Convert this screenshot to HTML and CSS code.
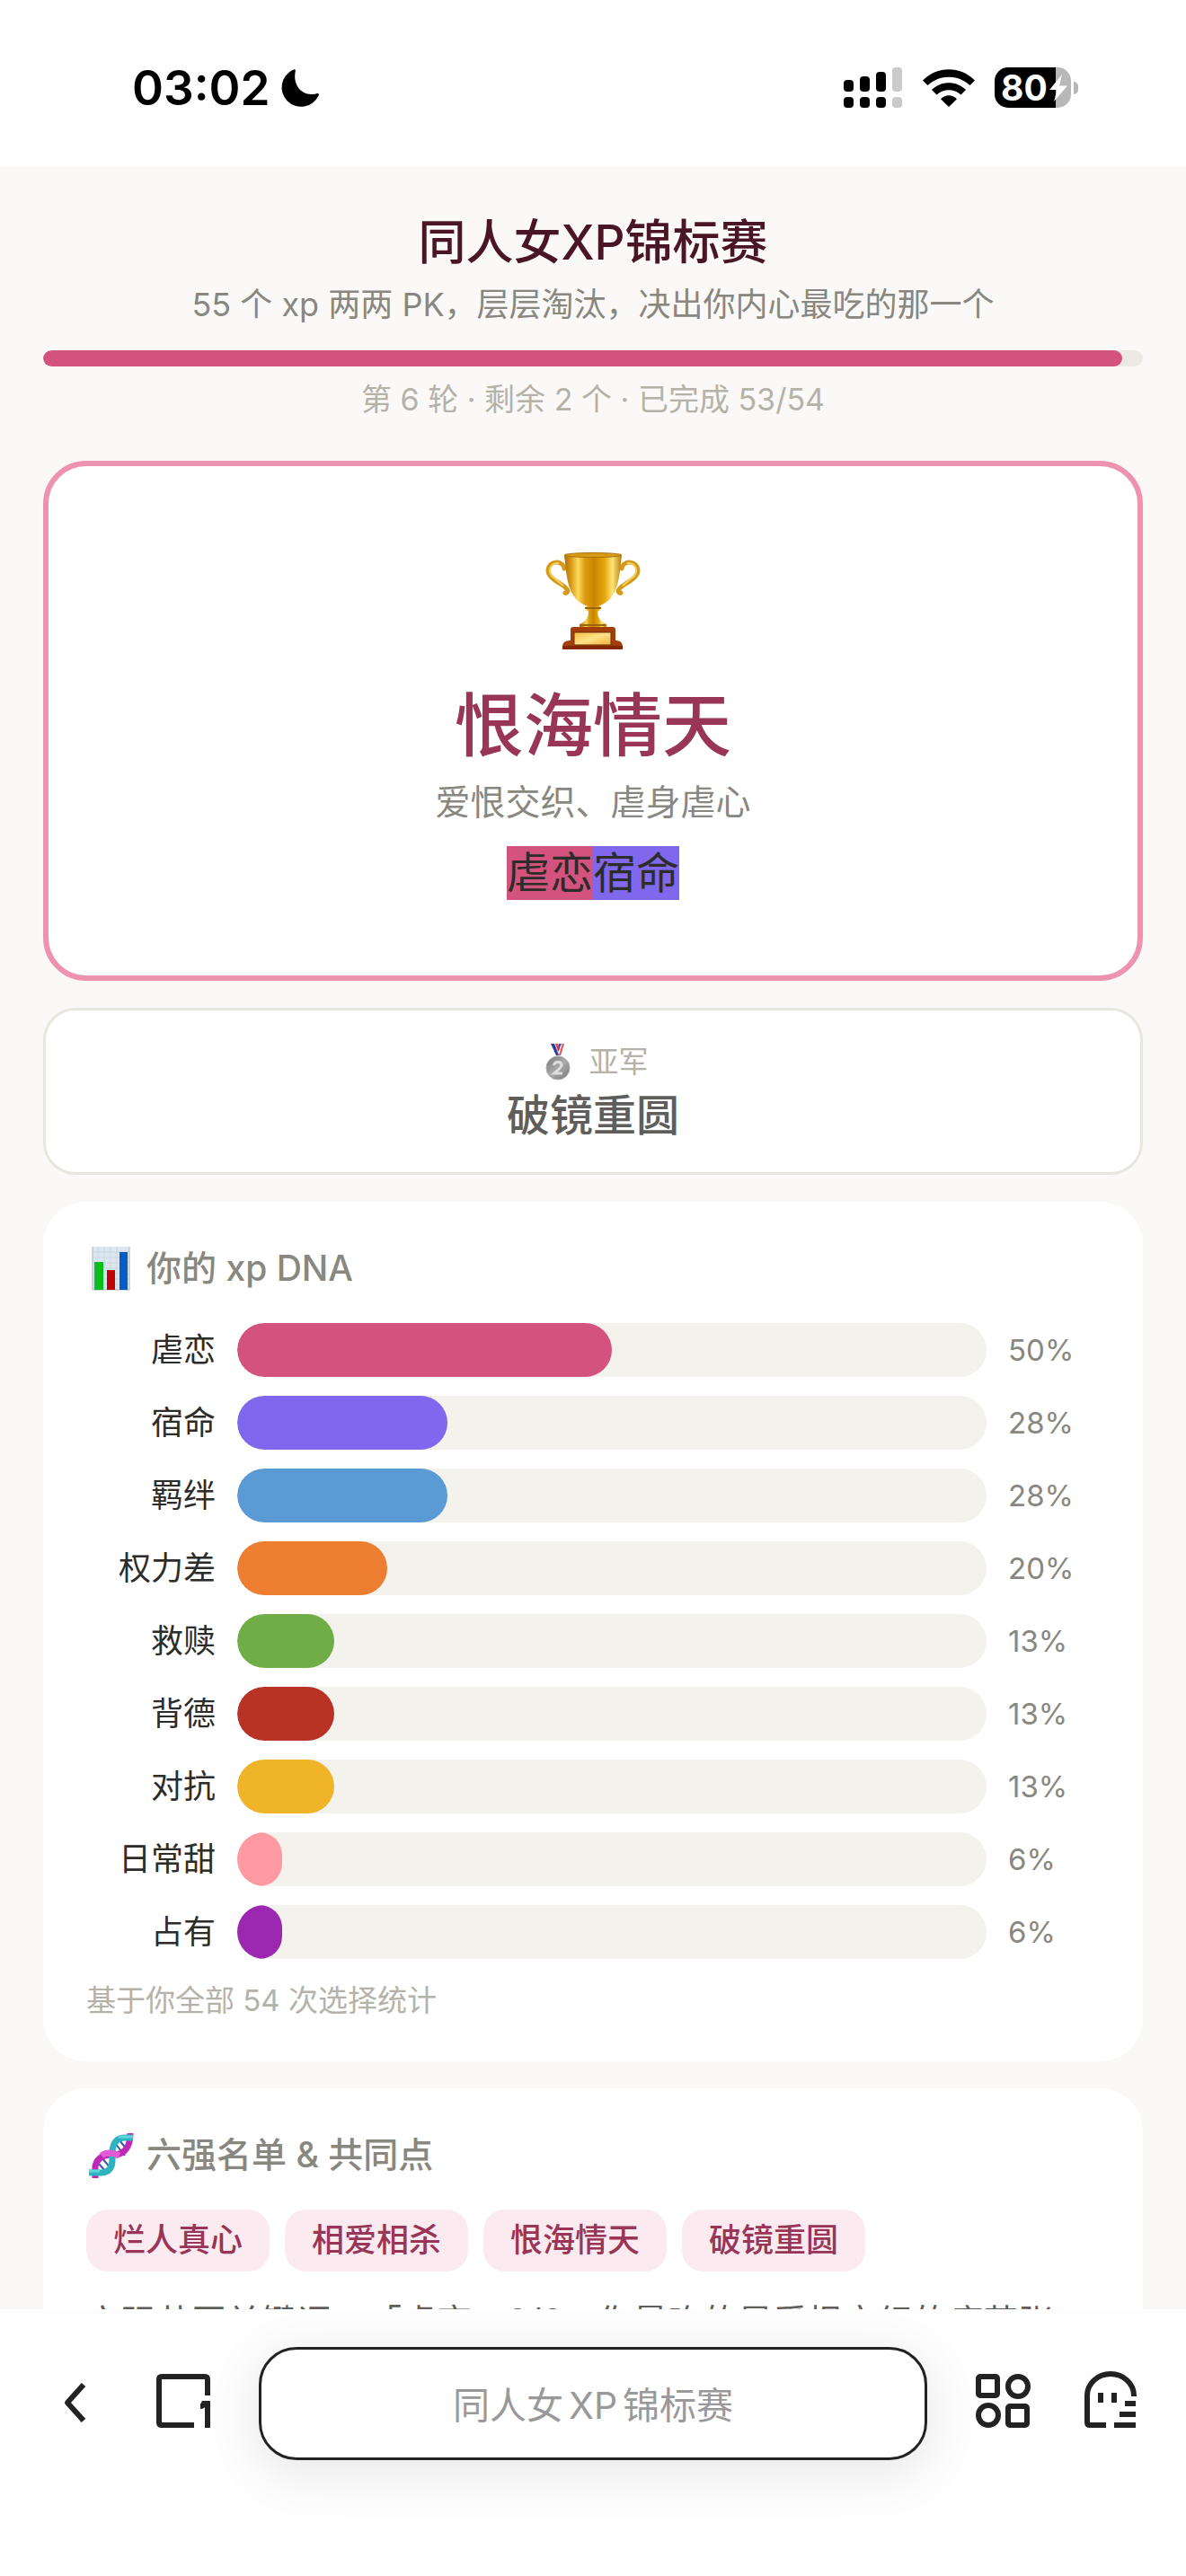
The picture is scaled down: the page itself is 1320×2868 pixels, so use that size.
FILE: index.html
```html
<!DOCTYPE html>
<html lang="zh-CN">
<head>
    <meta charset="UTF-8">
    <meta name="viewport" content="width=device-width, initial-scale=1.0">
    <title>同人女XP锦标赛</title>
    <link rel="stylesheet" href="styles.css">
</head>
<body>
    <div class="status-bar">
        <div class="status-left">
            <span class="time">03:02</span>
            <svg width="42" height="42" viewBox="0 0 42 42"><path d="M13 .8Q16.500-.8 15.800 2.500C13 15 20 28 34 28Q37.500 28 40 27Q42.800 26.500 41.500 29.500A21.500 21.500 0 1 1 13 .8z"/></svg>
        </div>
        <div class="status-right">
            <svg width="66" height="46" viewBox="0 0 66 46">
                <rect x="0" y="14" width="11" height="13" rx="4"/>
                <rect x="18" y="10" width="11" height="17" rx="4"/>
                <rect x="36" y="5" width="11" height="22" rx="4"/>
                <rect x="54" y="0" width="11" height="27" rx="4" fill="#cacaca"/>
                <rect x="0" y="33" width="11" height="12" rx="4"/>
                <rect x="18" y="33" width="11" height="12" rx="4"/>
                <rect x="36" y="33" width="11" height="12" rx="4"/>
                <rect x="54" y="33" width="11" height="12" rx="4" fill="#cacaca"/>
            </svg>
            <svg width="58" height="42" viewBox="0 0 58 42">
                <path d="M0 12.500C16-4 42-4 58 12.500L52.500 18C39.500 5.500 18.500 5.500 5.500 18z"/>
                <path d="M10 23C20.500 12.500 37.500 12.500 48 23L42.500 28.500C35 21.500 23 21.500 15.500 28.500z"/>
                <path d="M20 33.300C25 28 33 28 38 33.300L29 42z"/>
            </svg>
            <div class="battery">
                <span class="battery-level">80</span>
                <svg class="bolt" width="20" height="30" viewBox="0 0 20 30"><path d="M14 0L0 17H8.500L5 30L20 12.500H11z" fill="#fff"/></svg>
            </div>
        </div>
    </div>

    <main class="page">
        <h1>同人女XP锦标赛</h1>
        <p class="subtitle">55 个 xp 两两 PK，层层淘汰，决出你内心最吃的那一个</p>
        <div class="progress"><div class="progress-fill" style="width: 98.15%"></div></div>
        <p class="progress-text">第 6 轮 · 剩余 2 个 · 已完成 53/54</p>

        <section class="winner">
            <svg class="trophy" width="106" height="108" viewBox="0 0 106 108">
                <defs>
                    <linearGradient id="gold">
                        <stop offset="0" stop-color="#a96f08"/>
                        <stop offset=".12" stop-color="#d99a14"/>
                        <stop offset=".24" stop-color="#fbd95c"/>
                        <stop offset=".36" stop-color="#dc9c10"/>
                        <stop offset=".52" stop-color="#c98500"/>
                        <stop offset=".7" stop-color="#e5a70c"/>
                        <stop offset=".84" stop-color="#ffe478"/>
                        <stop offset="1" stop-color="#b77a08"/>
                    </linearGradient>
                    <linearGradient id="plate" x2="1" y2="1">
                        <stop offset="0" stop-color="#f3bd45"/>
                        <stop offset=".5" stop-color="#ffe288"/>
                        <stop offset="1" stop-color="#edb03a"/>
                    </linearGradient>
                </defs>
                <g fill="none" stroke="#d39a1c" stroke-width="5" stroke-linecap="round">
                    <path d="M21 18C20 9 4 8 3 20C3 31 24 36 25 43Q24 46 22 45"/>
                    <path d="M85 18C86 9 102 8 103 20C103 31 82 36 81 43Q82 46 84 45"/>
                </g>
                <g fill="none" stroke="#f7d263" stroke-width="2">
                    <path d="M15 12C7 11 2 19 7 26L20 37"/>
                    <path d="M91 12C99 11 104 19 99 26L86 37"/>
                </g>
                <path d="M21 3C24 28 24 52 47 60H59C82 52 82 28 85 3z" fill="url(#gold)"/>
                <ellipse cx="53" cy="3" rx="32" ry="2.500" fill="#d89b17" stroke="#a87210"/>
                <path d="M45 60H61V64L58 66Q58 76 68 80V84H38V80Q48 76 48 66L45 64z" fill="url(#gold)"/>
                <path d="M44 62H62M39 81H67" stroke="#9b6507" stroke-width="2"/>
                <path d="M28 86Q28 83 31 83H75Q78 83 78 86V98Q86 98 86 105V108H19V105Q19 98 28 98z" fill="#a33e08"/>
                <path d="M19 104H86V108H19z" fill="#842704"/>
                <rect x="32" y="89" width="41" height="14" fill="url(#plate)" stroke="#703008"/>
            </svg>
            <h2 class="winner-name">恨海情天</h2>
            <p class="winner-desc">爱恨交织、虐身虐心</p>
            <div class="winner-tags"><span class="tag tag-pink">虐恋</span><span class="tag tag-violet">宿命</span></div>
        </section>

        <section class="runner-up">
            <p class="runner-label">
                <svg width="36" height="40" viewBox="-8 0 36 40">
                    <defs><linearGradient id="silver" x2="1" y2="1"><stop offset="0" stop-color="#777"/><stop offset=".5" stop-color="#aaa"/><stop offset="1" stop-color="#777"/></linearGradient></defs>
                    <path d="M6 0H21L16 14H12z" fill="#e8e8f4"/>
                    <path d="M6 0H10L15 13H12z" fill="#2c3c98"/>
                    <path d="M11 0H14L16 6L14 9z" fill="#e84b4b"/>
                    <path d="M14 9L16 4L18 0H15z" fill="#3949a5"/>
                    <path d="M19 0H21L17 13H15z" fill="#ee4d4b"/>
                    <circle cx="14" cy="27" r="13" fill="url(#silver)" stroke="#aaa"/>
                    <path d="M9.500 24Q10 20.500 14 20.500Q18 20.500 18 24Q18 26 10 33H19" fill="none" stroke="#ddd" stroke-width="3"/>
                </svg>
                亚军
            </p>
            <h3 class="runner-name">破镜重圆</h3>
        </section>

        <section class="card">
            <h3 class="card-title">
                <svg width="54" height="54" viewBox="0 0 54 54">
                    <rect x="7" y="3" width="41" height="48" fill="#dce6ef"/>
                    <path d="M7 9H48M7 15H48M7 21H48M7 27H48M7 33H48M7 39H48M7 45H48M13 3V51M20 3V51M27 3V51M34 3V51" stroke="#c9d8e5"/>
                    <path d="M7 3V51H48V3" fill="none" stroke="#abb5c0"/>
                    <rect x="9" y="20" width="10" height="31" fill="#08bd1c"/>
                    <rect x="23" y="29" width="9" height="22" fill="#bd0505"/>
                    <rect x="37" y="9" width="9" height="42" fill="#075dc4"/>
                </svg>
                你的 xp DNA
            </h3>
            <div class="bars">
                <div class="bar-row"><span class="bar-label">虐恋</span><div class="track"><div class="fill pink" style="width: 50%"></div></div><span class="percent">50%</span></div>
                <div class="bar-row"><span class="bar-label">宿命</span><div class="track"><div class="fill violet" style="width: 28%"></div></div><span class="percent">28%</span></div>
                <div class="bar-row"><span class="bar-label">羁绊</span><div class="track"><div class="fill blue" style="width: 28%"></div></div><span class="percent">28%</span></div>
                <div class="bar-row"><span class="bar-label">权力差</span><div class="track"><div class="fill orange" style="width: 20%"></div></div><span class="percent">20%</span></div>
                <div class="bar-row"><span class="bar-label">救赎</span><div class="track"><div class="fill green" style="width: 13%"></div></div><span class="percent">13%</span></div>
                <div class="bar-row"><span class="bar-label">背德</span><div class="track"><div class="fill red" style="width: 13%"></div></div><span class="percent">13%</span></div>
                <div class="bar-row"><span class="bar-label">对抗</span><div class="track"><div class="fill yellow" style="width: 13%"></div></div><span class="percent">13%</span></div>
                <div class="bar-row"><span class="bar-label">日常甜</span><div class="track"><div class="fill rose" style="width: 6%"></div></div><span class="percent">6%</span></div>
                <div class="bar-row"><span class="bar-label">占有</span><div class="track"><div class="fill purple" style="width: 6%"></div></div><span class="percent">6%</span></div>
            </div>
            <p class="note">基于你全部 54 次选择统计</p>
        </section>

        <section class="card">
            <h3 class="card-title">
                <svg width="54" height="54" viewBox="0 0 54 54">
                    <path d="M13 36L23 47M18 31L27 42M32 14L43 28M37 11L46 22" stroke="#3557a8" stroke-width="2"/>
                    <path d="M10 53V40Q12 29 25 27Q40 29 46 18Q49 12 49 3" fill="none" stroke="#c026b8" stroke-width="7"/>
                    <path d="M3 47H17Q29 46 29 33V24Q30 8 43 8H52" fill="none" stroke="#2eb4c0" stroke-width="7"/>
                    <path d="M17 28Q24 22 37 28" fill="none" stroke="#e45bd5" stroke-width="7"/>
                    <path d="M36 7H52M3 45H15" stroke="#63d6dd" stroke-width="3"/>
                </svg>
                六强名单 &amp; 共同点
            </h3>
            <div class="chips">
                <span class="chip">烂人真心</span>
                <span class="chip">相爱相杀</span>
                <span class="chip">恨海情天</span>
                <span class="chip">破镜重圆</span>
            </div>
            <p class="analysis">六强共同关键词：「虐恋」3/6。你最吃的是爱恨交织的痛苦张</p>
        </section>
    </main>

    <nav class="toolbar">
        <button class="tool" aria-label="返回">
            <svg width="60" height="66" viewBox="0 0 60 66"><path d="M39 12L21 32L39 52" fill="none" stroke="#222" stroke-width="6" stroke-linejoin="round"/></svg>
        </button>
        <button class="tool" aria-label="标签页">
            <svg width="60" height="66" viewBox="0 0 60 66" fill="none" stroke="#222" stroke-width="6">
                <path d="M57 24V6Q57 3 54 3H6Q3 3 3 6V54Q3 57 6 57H42"/>
                <path d="M57 60V33H53Q52 36 49 36"/>
            </svg>
        </button>
        <button class="address">同人女<span class="latin">XP</span>锦标赛</button>
        <button class="tool" aria-label="菜单">
            <svg width="60" height="66" viewBox="0 0 60 66" fill="none" stroke="#222" stroke-width="6">
                <rect x="3" y="3" width="21" height="21" rx="2"/>
                <circle cx="47" cy="14" r="11"/>
                <circle cx="14" cy="46" r="11"/>
                <rect x="36" y="36" width="21" height="21" rx="2"/>
            </svg>
        </button>
        <button class="tool" aria-label="阅读">
            <svg width="60" height="66" viewBox="0 0 60 66" fill="none" stroke="#222" stroke-width="6">
                <path d="M56 25V24A25 23 0 0 0 4 24V54Q4 57 7 57H25M34 57H58M40 45H58M46 33H58"/>
                <path d="M19 21V32M34 21V32"/>
            </svg>
        </button>
    </nav>
</body>
</html>
```

FILE: styles.css
```css
* {
    margin: 0;
    padding: 0;
    box-sizing: border-box;
}

body {
    display: flex;
    flex-direction: column;
    height: 100vh;
    overflow: hidden;
    background: #faf9f7;
    color: #2c2c2a;
    font-family: Inter, "Noto Sans CJK SC", sans-serif;
}

h1, h2, h3 {
    font-weight: 500;
}

svg {
    display: block;
    overflow: visible;
}

/* status bar */
.status-bar {
    display: flex;
    justify-content: space-between;
    align-items: center;
    flex-shrink: 0;
    height: 186px;
    padding: 9px 120px 0 147px;
    background: #fefefe;
    color: #000;
}

.status-left {
    display: flex;
    align-items: center;
    gap: 12px;
}

.time {
    font-size: 53px;
    font-weight: 600;
}

.status-right {
    display: flex;
    align-items: center;
    gap: 22px;
}

.battery {
    position: relative;
    width: 85px;
    height: 45px;
    margin-right: 8px;
    padding-left: 7px;
    border-radius: 15px;
    background: linear-gradient(to right, #000 80%, #b8b8b8 80%);
}

.battery::after {
    content: "";
    position: absolute;
    right: -8px;
    top: 16px;
    width: 5px;
    height: 14px;
    border-radius: 0 7px 7px 0;
    background: #b8b8b8;
}

.battery-level {
    display: block;
    color: #fff;
    font-size: 39px;
    font-weight: 700;
    line-height: 45px;
}

.bolt {
    position: absolute;
    right: 4px;
    top: 8px;
}

/* page */
.page {
    flex: 1;
    min-height: 0;
    overflow: hidden;
    padding: 44px 48px 0;
}

h1 {
    color: #4b1528;
    font-size: 53px;
    line-height: 81px;
    text-align: center;
}

.subtitle {
    margin-top: 1px;
    color: #888780;
    font-size: 36px;
    line-height: 54px;
    text-align: center;
}

.progress {
    height: 18px;
    margin-top: 24px;
    border-radius: 9px;
    background: #ebe9e2;
    overflow: hidden;
}

.progress-fill {
    height: 100%;
    border-radius: 9px;
    background: #d4537e;
}

.progress-text {
    margin-top: 13px;
    color: #b4b2a9;
    font-size: 34px;
    line-height: 48px;
    text-align: center;
}

.winner {
    margin-top: 44px;
    padding: 96px 48px 84px;
    border: 6px solid #ed93b1;
    border-radius: 48px;
    background: #fff;
    text-align: center;
}

.trophy {
    margin: 0 auto;
}

.winner-name {
    margin-top: 34px;
    color: #993556;
    font-size: 77px;
    line-height: 102px;
}

.winner-desc {
    margin-top: 4px;
    color: #888780;
    font-size: 39px;
    line-height: 60px;
}

.winner-tags {
    display: flex;
    justify-content: center;
    margin-top: 19px;
}

.tag {
    font-size: 48px;
    line-height: 60px;
}

.tag-pink {
    background: #d4537e;
}

.tag-violet {
    background: #7f68ee;
}

.runner-up {
    margin-top: 30px;
    padding: 33px 48px 27px;
    border: 3px solid #e8e6df;
    border-radius: 36px;
    background: #fff;
    text-align: center;
}

.runner-label {
    display: flex;
    justify-content: center;
    align-items: center;
    gap: 21px;
    color: #b4b2a9;
    font-size: 33px;
    line-height: 48px;
}

.runner-name {
    color: #5f5e5a;
    font-size: 48px;
    line-height: 72px;
}

.card {
    margin-top: 30px;
    padding: 44px 48px 44px;
    border-radius: 48px;
    background: #fff;
}

.card-title {
    display: flex;
    align-items: center;
    gap: 13px;
    color: #888780;
    font-size: 39px;
    line-height: 60px;
}

.bars {
    display: flex;
    flex-direction: column;
    gap: 21px;
    margin-top: 31px;
}

.bar-row {
    display: flex;
    align-items: center;
    gap: 24px;
}

.bar-label {
    width: 144px;
    font-size: 36px;
    line-height: 60px;
    text-align: right;
}

.track {
    flex: 1;
    height: 60px;
    border-radius: 30px;
    background: #f3f2ed;
    overflow: hidden;
}

.fill {
    height: 100%;
    border-radius: 30px;
}

.pink { background: #d4537e; }
.violet { background: #7f68ee; }
.blue { background: #5b9bd5; }
.orange { background: #ed7d31; }
.green { background: #70ad47; }
.red { background: #b93226; }
.yellow { background: #f0b429; }
.rose { background: #ff9aa2; }
.purple { background: #9c27b0; }

.percent {
    width: 102px;
    color: #888780;
    font-size: 33px;
    line-height: 60px;
}

.note {
    margin-top: 22px;
    color: #b4b2a9;
    font-size: 33px;
    line-height: 48px;
}

.chips {
    display: flex;
    gap: 17px;
    margin-top: 31px;
}

.chip {
    padding: 0 30px;
    border-radius: 24px;
    background: #fbeaf0;
    color: #993556;
    font-size: 36px;
    font-weight: 500;
    line-height: 69px;
}

.analysis {
    margin-top: 23px;
    color: #5f5e5a;
    font-size: 39px;
    line-height: 66px;
    text-spacing-trim: space-all;
}

/* browser toolbar */
.toolbar {
    display: flex;
    align-items: flex-start;
    gap: 60px;
    flex-shrink: 0;
    height: 297px;
    padding: 42px 54px 0;
    background: #fefefe;
}

.tool {
    display: flex;
    align-items: center;
    width: 60px;
    height: 126px;
    border: none;
    background: none;
    cursor: pointer;
}

.address {
    flex: 1;
    height: 126px;
    margin: 0 -6px;
    padding-bottom: 3px;
    border: 3px solid #222;
    border-radius: 42px;
    background: #fff;
    box-shadow: 0 12px 60px rgba(0, 0, 0, 0.1);
    color: #999;
    font-family: inherit;
    font-size: 41px;
    cursor: pointer;
}

.latin {
    margin: 0 6px;
}
```
